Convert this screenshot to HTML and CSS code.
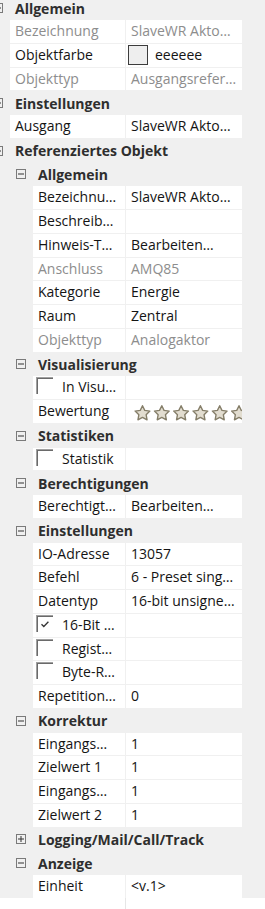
FILE: index.html
```html
<!DOCTYPE html>
<html lang="de">
<head>
    <meta charset="UTF-8">
    <meta name="viewport" content="width=device-width, initial-scale=1.0">
    <title>Eigenschaften</title>
    <link rel="stylesheet" href="styles.css">
</head>
<body>
    <!-- shared glyphs -->
    <svg class="sprite" xmlns="http://www.w3.org/2000/svg">
        <symbol id="minus" viewBox="0 0 10 10">
            <rect x="0.5" y="0.5" width="9" height="9" fill="none" stroke="#7a7a7a"/>
            <path d="M2 5h6" stroke="#333" stroke-width="1"/>
        </symbol>
        <symbol id="plus" viewBox="0 0 10 10">
            <rect x="0.5" y="0.5" width="9" height="9" fill="none" stroke="#7a7a7a"/>
            <path d="M2 5h6M5 2v6" stroke="#333" stroke-width="1"/>
        </symbol>
        <symbol id="star" viewBox="-8 -8 16 16">
            <polygon points="0,-7.3 2.12,-2.91 6.94,-2.26 3.42,1.11 4.29,5.91 0,3.6 -4.29,5.91 -3.42,1.11 -6.94,-2.26 -2.12,-2.91"
                     fill="#e2ddd0" stroke="#857e69" stroke-width="1.3" stroke-linejoin="round"/>
        </symbol>
    </svg>

    <div class="grid">
        <div class="cat"><svg class="toggle"><use href="#minus"/></svg>Allgemein</div>
        <div class="prop dim"><div class="name">Bezeichnung</div><div class="value">SlaveWR Akto…</div></div>
        <div class="prop">
            <div class="name">Objektfarbe</div>
            <div class="value color"><span class="swatch"></span>eeeeee</div>
        </div>
        <div class="prop dim"><div class="name">Objekttyp</div><div class="value">Ausgangsrefer…</div></div>

        <div class="cat"><svg class="toggle"><use href="#minus"/></svg>Einstellungen</div>
        <div class="prop"><div class="name">Ausgang</div><div class="value">SlaveWR Akto…</div></div>

        <div class="cat"><svg class="toggle"><use href="#minus"/></svg>Referenziertes Objekt</div>

        <div class="cat sub"><svg class="toggle"><use href="#minus"/></svg>Allgemein</div>
        <div class="prop sub"><div class="name">Bezeichnu…</div><div class="value">SlaveWR Akto…</div></div>
        <div class="prop sub"><div class="name">Beschreib…</div><div class="value"></div></div>
        <div class="prop sub"><div class="name">Hinweis-T…</div><div class="value">Bearbeiten…</div></div>
        <div class="prop sub dim"><div class="name">Anschluss</div><div class="value">AMQ85</div></div>
        <div class="prop sub"><div class="name">Kategorie</div><div class="value">Energie</div></div>
        <div class="prop sub"><div class="name">Raum</div><div class="value">Zentral</div></div>
        <div class="prop sub dim"><div class="name">Objekttyp</div><div class="value">Analogaktor</div></div>

        <div class="cat sub"><svg class="toggle"><use href="#minus"/></svg>Visualisierung</div>
        <div class="prop sub"><div class="name check"><span class="box"></span>In Visu…</div><div class="value"></div></div>
        <div class="prop sub">
            <div class="name">Bewertung</div>
            <div class="value rating">
                <svg class="stars" width="116" height="22">
                    <use href="#star" x="8" y="5" width="17" height="17"/>
                    <use href="#star" x="27.3" y="5" width="17" height="17"/>
                    <use href="#star" x="46.6" y="5" width="17" height="17"/>
                    <use href="#star" x="65.9" y="5" width="17" height="17"/>
                    <use href="#star" x="85.2" y="5" width="17" height="17"/>
                    <use href="#star" x="104.5" y="5" width="17" height="17"/>
                </svg>
            </div>
        </div>

        <div class="cat sub"><svg class="toggle"><use href="#minus"/></svg>Statistiken</div>
        <div class="prop sub"><div class="name check"><span class="box"></span>Statistik</div><div class="value"></div></div>

        <div class="cat sub"><svg class="toggle"><use href="#minus"/></svg>Berechtigungen</div>
        <div class="prop sub"><div class="name">Berechtigt…</div><div class="value">Bearbeiten…</div></div>

        <div class="cat sub"><svg class="toggle"><use href="#minus"/></svg>Einstellungen</div>
        <div class="prop sub"><div class="name">IO-Adresse</div><div class="value">13057</div></div>
        <div class="prop sub"><div class="name">Befehl</div><div class="value">6 - Preset sing…</div></div>
        <div class="prop sub"><div class="name">Datentyp</div><div class="value">16-bit unsigne…</div></div>
        <div class="prop sub">
            <div class="name check">
                <span class="box"><svg width="15" height="15"><path d="M4.5 8.2l2.3 2.3 4.6-4.8" fill="none" stroke="#333" stroke-width="1.3"/></svg></span>16-Bit …
            </div>
            <div class="value"></div>
        </div>
        <div class="prop sub"><div class="name check"><span class="box"></span>Regist…</div><div class="value"></div></div>
        <div class="prop sub"><div class="name check"><span class="box"></span>Byte-R…</div><div class="value"></div></div>
        <div class="prop sub"><div class="name">Repetition…</div><div class="value">0</div></div>

        <div class="cat sub"><svg class="toggle"><use href="#minus"/></svg>Korrektur</div>
        <div class="prop sub"><div class="name">Eingangs…</div><div class="value">1</div></div>
        <div class="prop sub"><div class="name">Zielwert 1</div><div class="value">1</div></div>
        <div class="prop sub"><div class="name">Eingangs…</div><div class="value">1</div></div>
        <div class="prop sub"><div class="name">Zielwert 2</div><div class="value">1</div></div>

        <div class="cat sub"><svg class="toggle"><use href="#plus"/></svg>Logging/Mail/Call/Track</div>

        <div class="cat sub"><svg class="toggle"><use href="#minus"/></svg>Anzeige</div>
        <div class="prop sub"><div class="name">Einheit</div><div class="value">&lt;v.1&gt;</div></div>
    </div>

    <!-- description pane below the grid -->
    <div class="footer"><div></div><div></div></div>
</body>
</html>
```

FILE: styles.css
```css
body {
    margin: 0;
    background-color: #f0f0f0;
    font-family: "Open Sans", "Noto Sans", sans-serif;
    font-size: 14px;
    color: #141414;
    overflow: hidden;
}

.sprite {
    display: none;
}

/* grid is scrolled a bit to the right and down */
.grid {
    margin: -3.75px 0 0 -24px;
    width: 266px;
}

/* Category rows */
.cat {
    display: flex;
    align-items: center;
    height: 23.75px;
    padding-left: 17px;
    box-sizing: border-box;
    font-weight: bold;
    color: #2e2e2e;
    white-space: nowrap;
}

.cat.sub {
    padding-left: 40px;
}

.toggle {
    width: 10px;
    height: 10px;
    margin-right: 12px;
    flex: none;
}

/* Property rows */
.prop {
    display: grid;
    grid-template-columns: 1fr 116px;
    column-gap: 1px;
    height: 23.75px;
    padding: 0 0 1px 34px;
    box-sizing: border-box;
}

.prop.sub {
    padding-left: 57px;
}

.name,
.value {
    background-color: #fff;
    line-height: 21px;
    padding: 0 0 1px 5px;
    white-space: nowrap;
    overflow: hidden;
}

.dim {
    color: #8d8d8d;
}

.value.color {
    display: flex;
    align-items: center;
    padding-left: 2px;
}

.swatch {
    width: 18px;
    height: 18px;
    border: 1px solid #3c3c3c;
    background-color: #eeeeee;
    margin-right: 7px;
    flex: none;
}

.value.rating {
    padding: 0;
}

.stars {
    display: block;
}

/* Checkbox rows */
.name.check {
    display: flex;
    align-items: flex-start;
    padding-left: 3px;
}

.box {
    width: 16px;
    height: 16px;
    margin: 1px 9px 0 0;
    border-top: 1px solid #a0a0a0;
    border-left: 1px solid #a0a0a0;
    box-shadow: inset 1px 1px 0 #6a6a6a;
    flex: none;
}

.box svg {
    display: block;
}

.footer {
    display: grid;
    grid-template-columns: 125px 1fr;
    column-gap: 1px;
    height: 20px;
    margin-top: -1px;
    background-color: #e6e6e6;
}

.footer div {
    background-color: #fff;
}
```
